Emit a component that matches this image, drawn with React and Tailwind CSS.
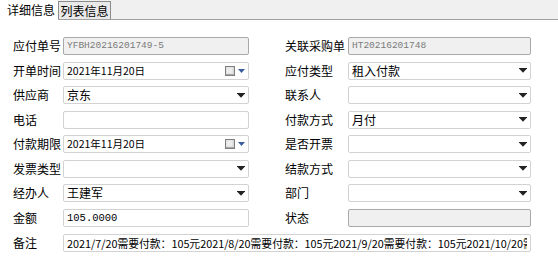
import React from 'react';

const CJK = { fontFamily: '"Noto Sans CJK SC", "Noto Sans", sans-serif' };
const MONO = { fontFamily: '"Liberation Mono", "DejaVu Sans Mono", monospace' };

function Arrow() {
  return (
    <svg width="8" height="5" viewBox="0 0 8 5" className="shrink-0">
      <rect x="0" y="0" width="8" height="1" fill="#222" />
      <polygon points="0.5,1 7.5,1 4,4.8" fill="#222" />
    </svg>
  );
}

function DateIcon() {
  return (
    <div className="flex items-center gap-[3px] shrink-0">
      <svg width="10" height="10" viewBox="0 0 10 10">
        <rect x="0.5" y="0.5" width="9" height="9" fill="#d9d9d9" stroke="#7f7f7f" />
        <rect x="1.5" y="1.5" width="6" height="6" fill="#ececec" />
        <rect x="1" y="8" width="8" height="1" fill="#a8a8a8" />
      </svg>
      <svg width="7" height="4" viewBox="0 0 7 4">
        <polygon points="0,0 7,0 3.5,4" fill="#3a5f9c" />
      </svg>
    </div>
  );
}

function Field({ value, kind = 'text', disabled, font = 'cjk', wide }) {
  const base = disabled
    ? 'border-[#a9a9a9] bg-[#f0f0f0]'
    : 'border-[#d2d2d2] bg-white';
  let textStyle = CJK;
  let textCls = 'text-[12px] text-black';
  if (font === 'mono') {
    textStyle = MONO;
    textCls = disabled ? 'text-[9.5px] text-[#7a7a7a]' : 'text-[10.5px] text-black';
  } else if (font === 'date') {
    textCls = 'text-[10.5px] text-black';
  } else if (font === 'note') {
    textCls = 'text-[10.8px] text-black';
  }
  return (
    <div className={`h-[18px] flex items-center border rounded-[2px] pl-[3px] pr-[3px] overflow-hidden ${base} ${wide ? 'w-[468px]' : 'flex-1'}`}>
      <span className={`flex-1 whitespace-nowrap overflow-hidden leading-[16px] ${textCls}`} style={textStyle}>
        {value}
      </span>
      {kind === 'select' && <Arrow />}
      {kind === 'date' && <DateIcon />}
    </div>
  );
}

const rows = [
  [
    { label: '应付单号', value: 'YFBH20216201749-5', disabled: true, font: 'mono' },
    { label: '关联采购单', value: 'HT20216201748', disabled: true, font: 'mono' },
  ],
  [
    { label: '开单时间', value: '2021年11月20日', kind: 'date', font: 'date' },
    { label: '应付类型', value: '租入付款', kind: 'select' },
  ],
  [
    { label: '供应商', value: '京东', kind: 'select' },
    { label: '联系人', value: '', kind: 'select' },
  ],
  [
    { label: '电话', value: '' },
    { label: '付款方式', value: '月付', kind: 'select' },
  ],
  [
    { label: '付款期限', value: '2021年11月20日', kind: 'date', font: 'date' },
    { label: '是否开票', value: '', kind: 'select' },
  ],
  [
    { label: '发票类型', value: '', kind: 'select' },
    { label: '结款方式', value: '', kind: 'select' },
  ],
  [
    { label: '经办人', value: '王建军', kind: 'select' },
    { label: '部门', value: '', kind: 'select' },
  ],
  [
    { label: '金额', value: '105.0000', font: 'mono' },
    { label: '状态', value: '', disabled: true },
  ],
];

export default function App() {
  return (
    <div className="w-[558px] h-[273px] bg-white overflow-hidden" style={CJK}>
      {/* tab header */}
      <div className="flex h-[20px]">
        <div className="w-[58px] pl-[7px] pt-[2px] text-[12px] text-black leading-[16px]">详细信息</div>
        <div className="flex-1 flex items-end bg-[#f0f0f0] border-b border-[#a0a0a0]">
          <div className="h-[18px] w-[53px] border-l border-t border-r border-[#8c8c8c] bg-[#e9e9e9] flex items-center justify-center text-[12px] text-black leading-[16px]">
            列表信息
          </div>
        </div>
      </div>

      {/* form */}
      <div className="pt-[17px] pl-[13px] flex flex-col gap-[6.5px]">
        {rows.map(([l, r]) => (
          <div key={l.label} className="flex items-center h-[18px]">
            <div className="w-[50px] text-[12px] text-black leading-[16px]">{l.label}</div>
            <div className="w-[186px] flex">
              <Field {...l} />
            </div>
            <div className="w-[36px]" />
            <div className="w-[63px] text-[12px] text-black leading-[16px]">{r.label}</div>
            <div className="w-[183px] flex">
              <Field {...r} />
            </div>
          </div>
        ))}
        <div className="flex items-center h-[19px]">
          <div className="w-[50px] text-[12px] text-black leading-[16px]">备注</div>
          <Field
            wide
            font="note"
            value="2021/7/20需要付款：105元2021/8/20需要付款：105元2021/9/20需要付款：105元2021/10/20需要付款：105元"
          />
        </div>
      </div>
    </div>
  );
}
